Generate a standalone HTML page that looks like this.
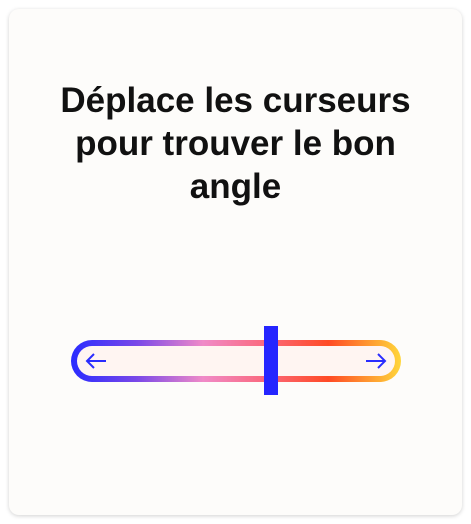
<!DOCTYPE html>
<html><head><meta charset="utf-8"><style>
html,body{margin:0;padding:0;width:471px;height:524px;background:#fff;overflow:hidden}
.card{position:absolute;left:9px;top:9px;width:453px;height:506px;background:#fdfcfa;border-radius:10px;box-shadow:0 1px 4px rgba(0,0,0,0.18)}
.t{position:absolute;left:0;top:79px;width:471px;text-align:center;font-family:"Liberation Sans",sans-serif;font-weight:bold;font-size:35px;line-height:43px;color:#111;letter-spacing:0px}
.track{position:absolute;left:71px;top:340px;width:330px;height:42px;border-radius:21px;background:linear-gradient(90deg,#2a2cff 0%,#7a48e8 20%,#f08ac8 40%,#fa6a80 58%,#ff4a25 78%,#ffd63a 100%)}
.inner{position:absolute;left:6px;top:6px;right:6px;bottom:6px;border-radius:15px;background:#fff5f2}
.h{position:absolute;left:264px;top:326px;width:14px;height:69px;background:#2525ff}
svg{position:absolute}
</style></head><body>
<div class="card"></div>
<div class="t">Déplace les curseurs<br>pour trouver le bon<br>angle</div>
<div class="track"><div class="inner"></div></div>
<svg style="left:84px;top:351px" width="24" height="20" viewBox="0 0 24 20"><path d="M22 10H3M10 3L3 10L10 17" fill="none" stroke="#2a2cff" stroke-width="2"/></svg>
<svg style="left:364px;top:351px" width="24" height="20" viewBox="0 0 24 20"><path d="M2 10H21M14 3L21 10L14 17" fill="none" stroke="#2a2cff" stroke-width="2"/></svg>
<div class="h"></div>
</body></html>
